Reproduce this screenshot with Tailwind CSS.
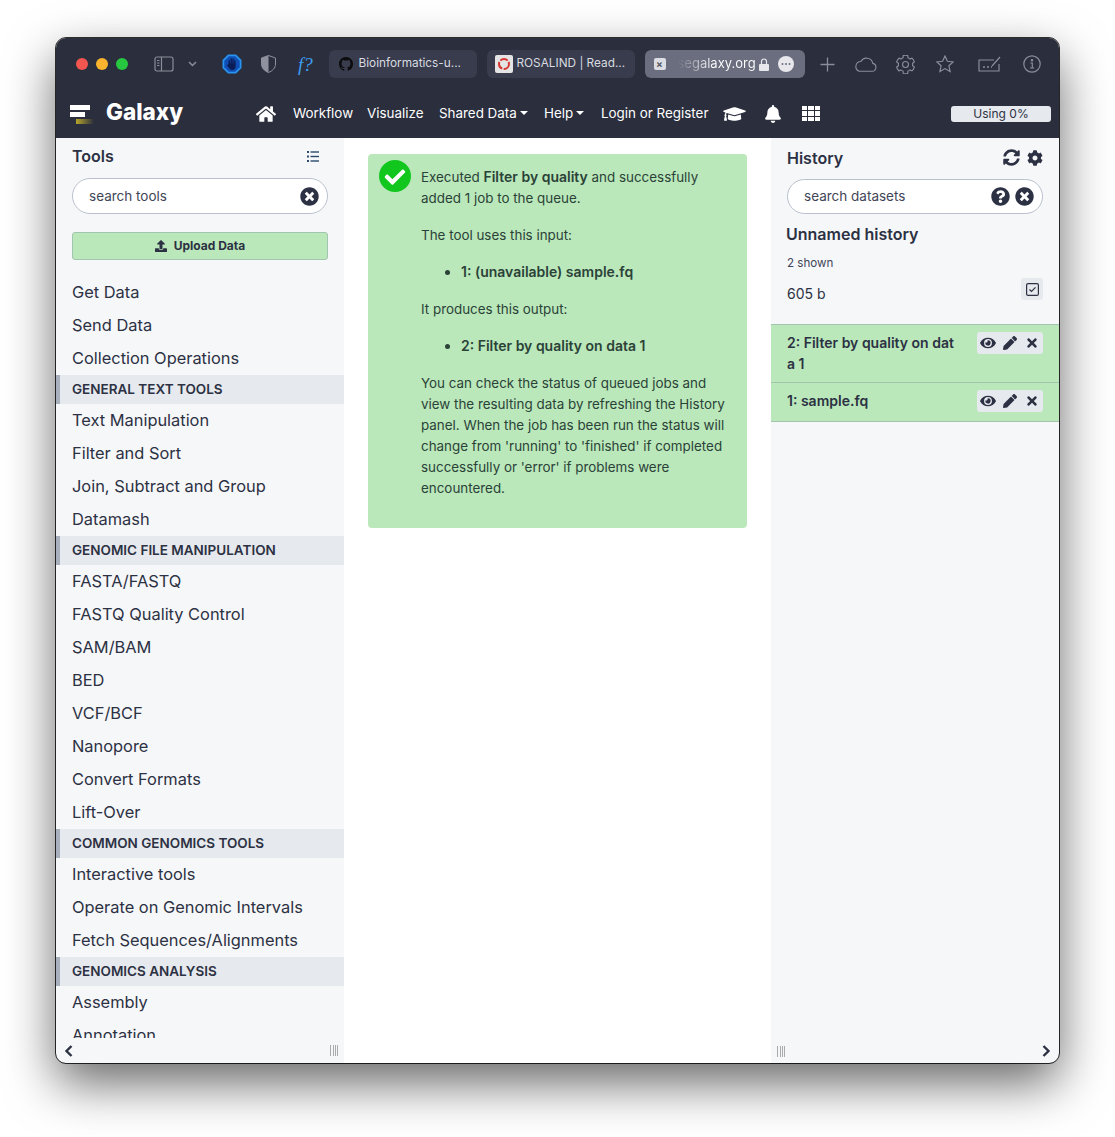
<!DOCTYPE html>
<html lang="en">
<head>
    <meta charset="UTF-8">
    <title>Galaxy</title>
    <script src="https://cdn.jsdelivr.net/npm/@tailwindcss/browser@4"></script>
</head>
<body class="bg-white w-[1115px] h-[1137px] overflow-hidden font-['Inter',sans-serif] text-[#2c3143]">
    <!-- browser window -->
    <div class="ml-[56px] mt-[38px] w-[1003px] h-[1025px] flex flex-col rounded-[10px] overflow-hidden outline outline-1 outline-black/80 shadow-[0_20px_50px_rgba(0,0,0,0.6)]">

        <!-- safari toolbar -->
        <div class="h-[54px] shrink-0 bg-[#2a2e3d] flex items-center pl-[20px] pb-[2px]">
            <span class="w-3 h-3 rounded-full bg-[#f2564f]"></span>
            <span class="w-3 h-3 rounded-full bg-[#fcb42e] ml-2"></span>
            <span class="w-3 h-3 rounded-full bg-[#27c83f] ml-2"></span>
            <svg class="ml-[26px]" width="20" height="16" viewBox="0 0 20 16" fill="none" stroke="#8b8e9a" stroke-width="1.2"><rect x="1" y="1" width="18" height="14" rx="2"/><path d="M7.500 1v14M3 4.500h2.500M3 7h2.500M3 9.500h2.500"/></svg>
            <svg class="ml-[14px]" width="9" height="6" viewBox="0 0 9 6" fill="none" stroke="#8b8e9a" stroke-width="1.5"><path d="M1 1l3.500 3.500L8 1"/></svg>
            <svg class="ml-[25px]" width="20" height="20" viewBox="0 0 20 20"><path d="M6 .5h8L19.500 6v8L14 19.500H6L.5 14V6z" fill="#2a93ee"/><path d="M6.800 2.300h6.400L17.700 6.800v6.400L13.200 17.700H6.800L2.300 13.200V6.800z" fill="#0f4fb5"/><path d="M7.300 10V6.800M9.200 10V5M11 10V5.200M12.800 10V6.800" stroke="#0c1c55" stroke-width="1.400" stroke-linecap="round"/><path d="M6.600 9.500h7v3c0 2-1.500 3.500-3.400 3.500-1.500 0-2.500-.8-3.100-2L5 11.500z" fill="#0c1c55"/></svg>
            <svg class="ml-[19px]" width="15" height="18" viewBox="0 0 15 18"><path d="M7.500 .5L14.500 3v6c0 4-3 7-7 8.500C3.500 16 .5 13 .5 9V3z" fill="none" stroke="#8f929e" stroke-width="1"/><path d="M7.500 .5L.5 3v6c0 4 3 7 7 8.500z" fill="#8f929e"/></svg>
            <span class="ml-[22px] w-[22px] text-[19px] leading-none italic text-[#3d9cf0] font-['Liberation_Serif',serif]">f?</span>

            <div class="ml-[8.5px] w-[148px] h-[28px] rounded-[6px] bg-[#383c4c] flex items-center pl-[10px] text-[11.8px] text-[#d9dbe1]">
                <svg width="14" height="14" viewBox="0 0 16 16" fill="#0c0c0f"><path d="M8 0C3.580 0 0 3.580 0 8c0 3.540 2.290 6.530 5.470 7.590.4.070.55-.17.55-.38 0-.19-.01-.82-.01-1.490-2.010.37-2.530-.49-2.690-.94-.09-.23-.48-.94-.82-1.130-.28-.15-.68-.52-.01-.53.63-.01 1.080.58 1.230.82.72 1.210 1.870.87 2.330.66.07-.52.28-.87.51-1.070-1.780-.2-3.640-.89-3.640-3.950 0-.87.31-1.590.82-2.150-.08-.2-.36-1.020.08-2.120 0 0 .67-.21 2.200.82.64-.18 1.320-.27 2-.27s1.360.09 2 .27c1.530-1.040 2.200-.82 2.200-.82.44 1.100.16 1.920.08 2.120.51.56.82 1.270.82 2.150 0 3.070-1.870 3.750-3.650 3.950.29.25.54.73.54 1.480 0 1.070-.01 1.930-.01 2.200 0 .21.15.46.55.38A8.013 8.013 0 0016 8c0-4.420-3.580-8-8-8z"/></svg>
                <span class="ml-[6px] whitespace-nowrap">Bioinformatics-u...</span>
            </div>
            <div class="ml-[10px] w-[148px] h-[28px] rounded-[6px] bg-[#383c4c] flex items-center pl-[8px] text-[11.8px] text-[#d9dbe1]">
                <span class="w-[18px] h-[18px] rounded-[2px] bg-[#e4e4e4] flex items-center justify-center">
                    <svg width="14" height="14" viewBox="0 0 14 14" fill="none" stroke="#d8352f" stroke-width="2" stroke-dasharray="8 1.500"><circle cx="7" cy="7" r="5"/></svg>
                </span>
                <span class="ml-[4px] whitespace-nowrap">ROSALIND | Read...</span>
            </div>
            <div class="ml-[10px] w-[160px] h-[28px] rounded-[6px] bg-[#6b6e7e] flex items-center pl-[9px] text-[13px] text-white">
                <span class="w-[12px] h-[12px] rounded-[2px] bg-[#dcdde2] flex items-center justify-center text-[10px] font-bold leading-none text-[#555866]">×</span>
                <span class="ml-[12px] whitespace-nowrap bg-gradient-to-r from-[#6b6e7e] to-white to-[45%] bg-clip-text text-transparent">segalaxy.org</span>
                <svg class="ml-[3px]" width="10" height="13" viewBox="0 0 10 13" fill="#e8e8ec"><path d="M1 6h8a1 1 0 0 1 1 1v5a1 1 0 0 1-1 1H1a1 1 0 0 1-1-1V7a1 1 0 0 1 1-1z"/><path d="M2.500 6V3.500a2.500 2.500 0 0 1 5 0V6" fill="none" stroke="#e8e8ec" stroke-width="1.200"/></svg>
                <svg class="ml-[9px]" width="16" height="16" viewBox="0 0 16 16"><circle cx="8" cy="8" r="8" fill="#e8e8ec"/><circle cx="4.500" cy="8" r="1" fill="#6b6e7e"/><circle cx="8" cy="8" r="1" fill="#6b6e7e"/><circle cx="11.500" cy="8" r="1" fill="#6b6e7e"/></svg>
            </div>
            <svg class="ml-[15px]" width="15" height="15" viewBox="0 0 15 15" stroke="#8b8e9a" stroke-width="1.300"><path d="M7.500 .5v14M.5 7.500h14"/></svg>
            <svg class="ml-[19px]" width="23" height="15" viewBox="0 0 23 15" fill="none" stroke="#8b8e9a" stroke-width="1.100"><path d="M5.500 14.300h12.500a4 4 0 0 0 .8-7.900A6.300 6.300 0 0 0 7 4.500a5 5 0 0 0-1.500 9.800z"/></svg>
            <svg class="ml-[19px]" width="19" height="19" viewBox="0 0 512 512" fill="none" stroke="#8b8e9a" stroke-width="30"><path d="M487.400 315.700l-42.600-24.600c4.300-23.200 4.300-47 0-70.200l42.600-24.600c4.900-2.800 7.100-8.600 5.500-14-11.100-35.600-30-67.800-54.700-94.600-3.800-4.100-10-5.100-14.800-2.300L380.800 110c-17.900-15.400-38.500-27.300-60.800-35.100V25.800c0-5.600-3.900-10.500-9.400-11.700-36.700-8.200-74.300-7.800-109.200 0-5.500 1.200-9.400 6.100-9.400 11.700V75c-22.200 7.900-42.800 19.800-60.800 35.100L88.700 85.500c-4.900-2.800-11-1.900-14.800 2.300-24.700 26.700-43.600 58.900-54.700 94.600-1.700 5.400.6 11.200 5.500 14L67.300 221c-4.300 23.200-4.300 47 0 70.200l-42.600 24.600c-4.900 2.800-7.100 8.600-5.500 14 11.100 35.600 30 67.800 54.700 94.600 3.800 4.100 10 5.100 14.800 2.300l42.600-24.600c17.900 15.400 38.500 27.300 60.800 35.100v49.200c0 5.600 3.900 10.500 9.400 11.700 36.700 8.200 74.300 7.800 109.200 0 5.500-1.200 9.400-6.100 9.400-11.700v-49.200c22.200-7.900 42.800-19.800 60.800-35.100l42.600 24.600c4.900 2.800 11 1.900 14.800-2.300 24.700-26.700 43.600-58.900 54.700-94.600 1.500-5.500-.7-11.300-5.600-14.100z"/><circle cx="256" cy="256" r="80"/></svg>
            <svg class="ml-[21px]" width="18" height="18" viewBox="0 0 18 18" fill="none" stroke="#8b8e9a" stroke-width="1.200"><path d="M9 1l2.400 5.300 5.800.6-4.300 3.900 1.200 5.700L9 13.600l-5.100 2.900 1.200-5.700L.8 6.900l5.800-.6z"/></svg>
            <svg class="ml-[24px]" width="24" height="18" viewBox="0 0 24 18" fill="none" stroke="#8b8e9a" stroke-width="1.200"><path d="M16 5H1v11h20V9M14 11L22 2"/><path d="M5 12h2M9 12h2M13 12h1" stroke-width="1.500"/></svg>
            <svg class="ml-[21px]" width="18" height="18" viewBox="0 0 18 18" fill="none" stroke="#8b8e9a" stroke-width="1.200"><circle cx="9" cy="9" r="8.200"/><path d="M7.300 8h2v5M7 13h4.200" /><circle cx="9" cy="5.300" r=".7" fill="#8b8e9a"/></svg>
        </div>

        <!-- galaxy masthead -->
        <div class="h-[46px] shrink-0 bg-[#2a2e3d] flex items-center text-[13.4px] text-white pb-[3px]">
            <svg class="ml-[14px]" width="24" height="22" viewBox="0 0 24 22"><defs><linearGradient id="gold" x1="0" x2="1" y1="0" y2="0"><stop offset="0" stop-color="#b8a52a"/><stop offset="1" stop-color="#b8a52a" stop-opacity="0"/></linearGradient></defs><rect x="0" y="2" width="20" height="5" fill="#fff"/><rect x="0" y="9" width="15" height="5" fill="#fff"/><rect x="6" y="16" width="18" height="5" fill="url(#gold)"/></svg>
            <span class="ml-[12px] w-[77px] text-[22.5px] font-extrabold leading-none -mt-[2px]">Galaxy</span>
            <svg class="ml-[73px]" width="20" height="18" viewBox="0 0 576 512" fill="#fff"><path d="M280.370 148.260L96 300.110V464a16 16 0 0 0 16 16l112.060-.29a16 16 0 0 0 15.920-16V368a16 16 0 0 1 16-16h64a16 16 0 0 1 16 16v95.640a16 16 0 0 0 16 16.050L464 480a16 16 0 0 0 16-16V300L295.670 148.260a12.190 12.190 0 0 0-15.300 0zM571.600 251.470L488 182.560V44.050a12 12 0 0 0-12-12h-56a12 12 0 0 0-12 12v72.610L318.470 43a48 48 0 0 0-61 0L4.340 251.470a12 12 0 0 0-1.600 16.900l25.500 31A12 12 0 0 0 45.150 301l235.220-193.740a12.190 12.190 0 0 1 15.300 0L530.900 301a12 12 0 0 0 16.900-1.600l25.500-31a12 12 0 0 0-1.700-16.930z"/></svg>
            <span class="ml-[17px] w-[74px]">Workflow</span>
            <span class="w-[72px]">Visualize</span>
            <span class="flex items-center w-[105px]">Shared Data<span class="ml-[3px] border-x-[4px] border-x-transparent border-t-[4px] border-t-white"></span></span>
            <span class="flex items-center w-[57px]">Help<span class="ml-[3px] border-x-[4px] border-x-transparent border-t-[4px] border-t-white"></span></span>
            <span class="w-[122px] whitespace-nowrap">Login or Register</span>
            <svg width="23" height="18" viewBox="0 0 640 512" fill="#fff"><path d="M622.340 153.200L343.400 67.500c-15.200-4.670-31.600-4.670-46.790 0L17.660 153.200c-23.540 7.230-23.540 38.360 0 45.590l48.630 14.940c-10.670 13.190-17.230 29.280-17.880 46.900C38.780 266.150 32 276.110 32 288c0 10.780 5.680 19.850 13.860 25.650L20.330 428.530C18.110 438.520 25.710 448 35.940 448h56.110c10.240 0 17.840-9.480 15.620-19.470L82.140 313.650C90.320 307.850 96 298.780 96 288c0-11.570-6.470-21.250-15.660-26.870.76-15.020 8.440-28.300 20.690-36.720L296.600 284.500c9.060 2.780 26.440 6.250 46.790 0l278.950-85.700c23.550-7.240 23.550-38.360 0-45.600zM352.790 315.090c-28.530 8.760-52.840 3.920-65.590 0l-145.020-44.550L128 384c0 35.350 85.960 64 192 64s192-28.650 192-64l-14.180-113.470-145.030 44.560z"/></svg>
            <svg class="ml-[19px]" width="16" height="18" viewBox="0 0 448 512" fill="#fff"><path d="M224 512c35.320 0 63.970-28.650 63.970-64H160.030c0 35.350 28.650 64 63.970 64zm215.390-149.710c-19.320-20.760-55.470-51.990-55.470-154.290 0-77.700-54.480-139.900-127.940-155.160V32c0-17.670-14.320-32-31.980-32s-31.980 14.330-31.980 32v20.840C118.560 68.100 64.080 130.300 64.080 208c0 102.300-36.150 133.530-55.470 154.290-6 6.450-8.660 14.160-8.610 21.710.11 16.400 12.980 32 32.100 32h383.800c19.120 0 32-15.600 32.100-32 .05-7.550-2.610-15.270-8.610-21.710z"/></svg>
            <div class="ml-[21px] w-[18px] h-[16px] grid grid-cols-3 grid-rows-3 gap-[1px]">
                <span class="bg-white"></span><span class="bg-white"></span><span class="bg-white"></span>
                <span class="bg-white"></span><span class="bg-white"></span><span class="bg-white"></span>
                <span class="bg-white"></span><span class="bg-white"></span><span class="bg-white"></span>
            </div>
            <div class="ml-[131px] w-[100px] h-[16px] rounded-[3px] bg-[#e6e9ed] text-[#2c3143] text-[12px] leading-[16px] text-center">Using 0%</div>
        </div>

        <div class="flex-1 flex min-h-0">
            <!-- tools panel -->
            <div class="w-[288px] shrink-0 bg-[#f6f7f9] flex flex-col">
                <div class="h-[40px] shrink-0 flex items-center justify-between pl-[16px] pr-[25px] pb-[4px]">
                    <span class="text-[16px] font-semibold">Tools</span>
                    <svg width="12" height="11" viewBox="0 0 12 11" fill="#2c4a6e"><rect y="0" width="2" height="2"/><rect y="4.500" width="2" height="2"/><rect y="9" width="2" height="2"/><rect x="3.500" y=".3" width="8.500" height="1.400"/><rect x="3.500" y="4.800" width="8.500" height="1.400"/><rect x="3.500" y="9.300" width="8.500" height="1.400"/></svg>
                </div>
                <div class="mx-[16px] h-[36px] shrink-0 rounded-full bg-white border border-[#b8c0cc] flex items-center justify-between pl-[16px] pr-[8px] text-[13.5px] text-[#3f4557]">
                    <span>search tools</span>
                    <svg width="19" height="19" viewBox="0 0 512 512" fill="#2c3143"><path d="M256 8C119 8 8 119 8 256s111 248 248 248 248-111 248-248S393 8 256 8zm121.600 313.100c4.700 4.700 4.700 12.300 0 17L338 377.600c-4.700 4.700-12.300 4.700-17 0L256 312l-65.100 65.600c-4.700 4.700-12.300 4.700-17 0L134.400 338c-4.700-4.700-4.700-12.300 0-17l65.600-65-65.600-65.100c-4.700-4.700-4.700-12.300 0-17l39.600-39.600c4.700-4.700 12.300-4.700 17 0l65 65.700 65.100-65.600c4.700-4.700 12.300-4.700 17 0l39.600 39.600c4.700 4.700 4.700 12.300 0 17L312 256l65.600 65.100z"/></svg>
                </div>
                <div class="mx-[16px] mt-[18px] h-[28px] shrink-0 rounded-[3px] bg-[#bae8ba] border border-[#a3c4ad] flex items-center justify-center text-[12px] font-bold">
                    <svg width="12" height="12" viewBox="0 0 512 512" fill="#2c3143"><path d="M296 384h-80c-13.300 0-24-10.700-24-24V192h-87.700c-17.800 0-26.700-21.500-14.100-34.100L242.300 5.700c7.500-7.500 19.800-7.500 27.300 0l152.200 152.200c12.600 12.600 3.700 34.100-14.100 34.100H320v168c0 13.300-10.700 24-24 24zm216-8v112c0 13.300-10.700 24-24 24H24c-13.300 0-24-10.700-24-24V376c0-13.300 10.700-24 24-24h136v8c0 30.900 25.100 56 56 56h80c30.900 0 56-25.100 56-56v-8h136c13.300 0 24 10.700 24 24z"/></svg>
                    <span class="ml-[7px]">Upload Data</span>
                </div>
                <div class="mt-[16px] h-[762px] shrink-0 overflow-hidden text-[16.4px]">
                    <div class="h-[33px] leading-[33px] pl-[16px]">Get Data</div>
                    <div class="h-[33px] leading-[33px] pl-[16px]">Send Data</div>
                    <div class="h-[33px] leading-[33px] pl-[16px]">Collection Operations</div>
                    <div class="h-[29px] leading-[29px] pl-[12px] border-l-4 border-[#a9b1bf] bg-[#e6e9ed] text-[13.5px] font-semibold">GENERAL TEXT TOOLS</div>
                    <div class="h-[33px] leading-[33px] pl-[16px]">Text Manipulation</div>
                    <div class="h-[33px] leading-[33px] pl-[16px]">Filter and Sort</div>
                    <div class="h-[33px] leading-[33px] pl-[16px]">Join, Subtract and Group</div>
                    <div class="h-[33px] leading-[33px] pl-[16px]">Datamash</div>
                    <div class="h-[29px] leading-[29px] pl-[12px] border-l-4 border-[#a9b1bf] bg-[#e6e9ed] text-[13.5px] font-semibold">GENOMIC FILE MANIPULATION</div>
                    <div class="h-[33px] leading-[33px] pl-[16px]">FASTA/FASTQ</div>
                    <div class="h-[33px] leading-[33px] pl-[16px]">FASTQ Quality Control</div>
                    <div class="h-[33px] leading-[33px] pl-[16px]">SAM/BAM</div>
                    <div class="h-[33px] leading-[33px] pl-[16px]">BED</div>
                    <div class="h-[33px] leading-[33px] pl-[16px]">VCF/BCF</div>
                    <div class="h-[33px] leading-[33px] pl-[16px]">Nanopore</div>
                    <div class="h-[33px] leading-[33px] pl-[16px]">Convert Formats</div>
                    <div class="h-[33px] leading-[33px] pl-[16px]">Lift-Over</div>
                    <div class="h-[29px] leading-[29px] pl-[12px] border-l-4 border-[#a9b1bf] bg-[#e6e9ed] text-[13.5px] font-semibold">COMMON GENOMICS TOOLS</div>
                    <div class="h-[33px] leading-[33px] pl-[16px]">Interactive tools</div>
                    <div class="h-[33px] leading-[33px] pl-[16px]">Operate on Genomic Intervals</div>
                    <div class="h-[33px] leading-[33px] pl-[16px]">Fetch Sequences/Alignments</div>
                    <div class="h-[29px] leading-[29px] pl-[12px] border-l-4 border-[#a9b1bf] bg-[#e6e9ed] text-[13.5px] font-semibold">GENOMICS ANALYSIS</div>
                    <div class="h-[33px] leading-[33px] pl-[16px]">Assembly</div>
                    <div class="h-[33px] leading-[33px] pl-[16px]">Annotation</div>
                </div>
                <div class="flex-1 flex items-center justify-between pl-[8px] pr-[6px]">
                    <svg width="10" height="12" viewBox="0 0 10 12" fill="none" stroke="#2c3143" stroke-width="2.400"><path d="M7.500 1L2.500 6l5 5"/></svg>
                    <div class="w-[8px] h-[11px] border-x border-[#aaa] flex justify-center gap-[1px] px-[1px]"><span class="w-px bg-[#aaa]"></span><span class="w-px bg-[#aaa]"></span></div>
                </div>
            </div>

            <!-- center panel -->
            <div class="flex-1 bg-white pt-[16px] pl-[24px] pr-[24px]">
                <div class="h-[374px] rounded-[4px] bg-[#bae8ba] flex text-[13.4px] leading-[21px] text-[#2b4238] pl-[11px] pt-[6px]">
                    <svg class="shrink-0" width="32" height="32" viewBox="8 8 496 496"><path fill="#11c71e" d="M504 256c0 136.967-111.033 248-248 248S8 392.967 8 256 119.033 8 256 8s248 111.033 248 248z"/><path fill="#fff" d="M227.314 387.314l184-184c6.248-6.248 6.248-16.379 0-22.627l-22.627-22.627c-6.248-6.249-16.379-6.249-22.628 0L216 308.118l-70.059-70.059c-6.248-6.248-16.379-6.248-22.628 0l-22.627 22.627c-6.248 6.248-6.248 16.379 0 22.627l104 104c6.249 6.249 16.379 6.249 22.628.001z"/></svg>
                    <div class="ml-[10px] pt-[6px]">
                        <p class="whitespace-nowrap">Executed <b class="font-semibold text-[14px]">Filter by quality</b> and successfully<br>added 1 job to the queue.</p>
                        <p class="mt-[16px]">The tool uses this input:</p>
                        <ul class="mt-[15px] pl-[40px] list-disc font-semibold text-[14px]"><li>1: (unavailable) sample.fq</li></ul>
                        <p class="mt-[17px]">It produces this output:</p>
                        <ul class="mt-[15px] pl-[40px] list-disc font-semibold text-[14px]"><li>2: Filter by quality on data 1</li></ul>
                        <p class="mt-[17px] whitespace-nowrap">You can check the status of queued jobs and<br>view the resulting data by refreshing the History<br>panel. When the job has been run the status will<br>change from 'running' to 'finished' if completed<br>successfully or 'error' if problems were<br>encountered.</p>
                    </div>
                </div>
            </div>

            <!-- history panel -->
            <div class="w-[288px] shrink-0 bg-[#f6f7f9] flex flex-col">
                <div class="h-[41px] shrink-0 flex items-center justify-between pl-[16px] pr-[16px] pb-[2px]">
                    <span class="text-[16px] font-semibold">History</span>
                    <div class="flex items-center gap-[7px]">
                        <svg width="17" height="17" viewBox="0 0 512 512" fill="#2c3143"><path d="M370.720 133.280C339.458 104.008 298.888 87.962 255.848 88c-77.458.068-144.328 53.178-162.791 126.850-1.344 5.363-6.122 9.150-11.651 9.150H24.103c-7.498 0-13.194-6.807-11.807-14.176C33.933 94.924 134.813 8 256 8c66.448 0 126.791 26.136 171.315 68.685L463.030 40.970C478.149 25.851 504 36.559 504 57.941V192c0 13.255-10.745 24-24 24H345.941c-21.382 0-32.090-25.851-16.971-40.971l41.750-41.749zM32 296h134.059c21.382 0 32.090 25.851 16.971 40.971l-41.750 41.750c31.262 29.273 71.835 45.319 114.876 45.280 77.418-.07 144.315-53.144 162.787-126.849 1.344-5.363 6.122-9.150 11.651-9.150h57.304c7.498 0 13.194 6.807 11.807 14.176C478.067 417.076 377.187 504 256 504c-66.448 0-126.791-26.136-171.315-68.685L48.970 471.030C33.851 486.149 8 475.441 8 454.059V320c0-13.255 10.745-24 24-24z"/></svg>
                        <svg width="16" height="16" viewBox="0 0 512 512" fill="#2c3143"><path d="M487.400 315.700l-42.600-24.600c4.300-23.200 4.300-47 0-70.200l42.600-24.600c4.900-2.800 7.100-8.600 5.500-14-11.100-35.600-30-67.800-54.700-94.600-3.800-4.100-10-5.100-14.800-2.300L380.800 110c-17.900-15.400-38.500-27.300-60.800-35.100V25.800c0-5.600-3.900-10.500-9.400-11.700-36.700-8.200-74.300-7.800-109.200 0-5.500 1.200-9.400 6.100-9.400 11.700V75c-22.200 7.900-42.800 19.800-60.800 35.100L88.700 85.500c-4.900-2.800-11-1.900-14.800 2.300-24.700 26.700-43.600 58.900-54.700 94.600-1.700 5.400.6 11.200 5.500 14L67.300 221c-4.300 23.200-4.300 47 0 70.200l-42.600 24.600c-4.900 2.800-7.100 8.600-5.500 14 11.100 35.600 30 67.800 54.700 94.600 3.800 4.100 10 5.100 14.800 2.300l42.600-24.600c17.900 15.400 38.500 27.300 60.800 35.100v49.200c0 5.600 3.900 10.500 9.400 11.700 36.700 8.200 74.300 7.800 109.200 0 5.500-1.200 9.400-6.100 9.400-11.700v-49.200c22.200-7.900 42.800-19.800 60.800-35.100l42.600 24.600c4.900 2.800 11 1.900 14.800-2.300 24.700-26.700 43.600-58.900 54.700-94.600 1.500-5.500-.7-11.300-5.600-14.100zM256 336c-44.100 0-80-35.900-80-80s35.900-80 80-80 80 35.900 80 80-35.900 80-80 80z"/></svg>
                    </div>
                </div>
                <div class="mx-[16px] h-[35px] shrink-0 rounded-full bg-white border border-[#b8c0cc] flex items-center justify-between pl-[16px] pr-[8px] text-[13.5px] text-[#3f4557]">
                    <span>search datasets</span>
                    <div class="flex gap-[5px]">
                        <svg width="19" height="19" viewBox="0 0 512 512" fill="#2c3143"><path d="M504 256c0 136.997-111.043 248-248 248S8 392.997 8 256C8 119.083 119.043 8 256 8s248 111.083 248 248zM262.655 90c-54.497 0-89.255 22.957-116.549 63.758-3.536 5.286-2.353 12.415 2.715 16.258l34.699 26.310c5.205 3.947 12.621 3.008 16.665-2.122 17.864-22.658 30.113-35.797 57.303-35.797 20.429 0 45.698 13.148 45.698 32.958 0 14.976-12.363 22.667-32.534 33.976C247.128 238.528 216 254.941 216 296v4c0 6.627 5.373 12 12 12h56c6.627 0 12-5.373 12-12v-1.333c0-28.462 83.186-29.647 83.186-106.667 0-58.002-60.165-102-116.531-102zM256 338c-25.365 0-46 20.635-46 46 0 25.364 20.635 46 46 46s46-20.636 46-46c0-25.365-20.635-46-46-46z"/></svg>
                        <svg width="19" height="19" viewBox="0 0 512 512" fill="#2c3143"><path d="M256 8C119 8 8 119 8 256s111 248 248 248 248-111 248-248S393 8 256 8zm121.600 313.100c4.700 4.700 4.700 12.300 0 17L338 377.600c-4.700 4.700-12.300 4.700-17 0L256 312l-65.100 65.600c-4.700 4.700-12.300 4.700-17 0L134.400 338c-4.700-4.700-4.700-12.300 0-17l65.600-65-65.600-65.100c-4.700-4.700-4.700-12.300 0-17l39.600-39.600c4.700-4.700 12.300-4.700 17 0l65 65.700 65.100-65.600c4.700-4.700 12.300-4.700 17 0l39.600 39.600c4.700 4.700 4.700 12.300 0 17L312 256l65.600 65.100z"/></svg>
                    </div>
                </div>
                <div class="pl-[15px] pt-[10px] text-[16px] font-semibold leading-[20px]">Unnamed history</div>
                <div class="pl-[16px] mt-[10px] text-[11.6px] leading-[18px] text-[#3f4557]">2 shown</div>
                <div class="pl-[16px] pr-[16px] mt-[7px] h-[32px] flex justify-between text-[14px] text-[#2c3143]">
                    <span class="leading-[30px]">605 b</span>
                    <span class="w-[22px] h-[22px] -mt-px rounded-[3px] bg-[#e6e9ed] flex items-center justify-center">
                        <svg width="13" height="13" viewBox="0 0 13 13" fill="none" stroke="#2c3143" stroke-width="1.200"><rect x=".6" y=".6" width="11.800" height="11.800" rx="1.500"/><path d="M3.500 6.500l2 2L9.500 4.300"/></svg>
                    </span>
                </div>
                <div class="mt-[12.5px] h-[59px] shrink-0 bg-[#bae8ba] border-y border-[#a3c4ad] flex items-start justify-between pl-[16px] pr-[16px] pt-[7px] text-[14px] font-semibold leading-[21px]">
                    <div class="w-[172px] break-all">2: Filter by quality on dat<br>a 1</div>
                    <div class="flex h-[22px] rounded-[3px] bg-[#e6e9ed]">
                        <span class="w-[22px] flex items-center justify-center"><svg width="16" height="14" viewBox="0 0 576 512" fill="#2c3143"><path d="M572.520 241.400C518.290 135.590 410.930 64 288 64S57.680 135.640 3.480 241.410a32.350 32.350 0 0 0 0 29.190C57.710 376.410 165.070 448 288 448s230.320-71.640 284.520-177.410a32.350 32.350 0 0 0 0-29.190zM288 400a144 144 0 1 1 144-144 143.930 143.930 0 0 1-144 144zm0-240a95.310 95.310 0 0 0-25.310 3.790 47.850 47.850 0 0 1-66.900 66.900A95.780 95.780 0 1 0 288 160z"/></svg></span>
                        <span class="w-[22px] flex items-center justify-center"><svg width="14" height="14" viewBox="0 0 512 512" fill="#2c3143"><path d="M497.900 142.100l-46.100 46.100c-4.700 4.700-12.300 4.700-17 0l-111-111c-4.700-4.700-4.700-12.300 0-17l46.100-46.100c18.700-18.700 49.100-18.700 67.900 0l60.100 60.100c18.800 18.700 18.800 49.100 0 67.900zM284.200 99.800L21.600 362.400.4 483.900c-2.900 16.400 11.400 30.600 27.800 27.800l121.500-21.300 262.600-262.600c4.700-4.700 4.700-12.300 0-17l-111-111c-4.800-4.700-12.400-4.700-17.100 0z"/></svg></span>
                        <span class="w-[22px] flex items-center justify-center"><svg width="10" height="14" viewBox="0 0 352 512" fill="#2c3143"><path d="M242.720 256l100.070-100.070c12.280-12.280 12.280-32.190 0-44.480l-22.240-22.240c-12.280-12.280-32.190-12.280-44.480 0L176 189.280 75.930 89.210c-12.280-12.280-32.190-12.280-44.480 0L9.210 111.450c-12.280 12.280-12.280 32.190 0 44.480L109.280 256 9.210 356.070c-12.280 12.280-12.280 32.190 0 44.480l22.240 22.240c12.280 12.280 32.200 12.280 44.480 0L176 322.720l100.070 100.070c12.280 12.280 32.200 12.280 44.480 0l22.240-22.240c12.280-12.280 12.280-32.190 0-44.480L242.720 256z"/></svg></span>
                    </div>
                </div>
                <div class="h-[39px] shrink-0 bg-[#bae8ba] border-b border-[#a3c4ad] flex items-start justify-between pl-[16px] pr-[16px] pt-[7px] text-[14px] font-semibold leading-[21px]">
                    <div>1: sample.fq</div>
                    <div class="flex h-[22px] rounded-[3px] bg-[#e6e9ed]">
                        <span class="w-[22px] flex items-center justify-center"><svg width="16" height="14" viewBox="0 0 576 512" fill="#2c3143"><path d="M572.520 241.400C518.290 135.590 410.930 64 288 64S57.680 135.640 3.480 241.410a32.350 32.350 0 0 0 0 29.190C57.710 376.410 165.070 448 288 448s230.320-71.640 284.520-177.410a32.350 32.350 0 0 0 0-29.190zM288 400a144 144 0 1 1 144-144 143.930 143.930 0 0 1-144 144zm0-240a95.310 95.310 0 0 0-25.310 3.790 47.850 47.850 0 0 1-66.900 66.900A95.780 95.780 0 1 0 288 160z"/></svg></span>
                        <span class="w-[22px] flex items-center justify-center"><svg width="14" height="14" viewBox="0 0 512 512" fill="#2c3143"><path d="M497.900 142.100l-46.100 46.100c-4.700 4.700-12.300 4.700-17 0l-111-111c-4.700-4.700-4.700-12.300 0-17l46.100-46.100c18.700-18.700 49.100-18.700 67.900 0l60.100 60.100c18.800 18.700 18.800 49.100 0 67.900zM284.200 99.800L21.600 362.400.4 483.900c-2.900 16.400 11.400 30.600 27.800 27.800l121.500-21.300 262.600-262.600c4.700-4.700 4.700-12.300 0-17l-111-111c-4.800-4.700-12.400-4.700-17.100 0z"/></svg></span>
                        <span class="w-[22px] flex items-center justify-center"><svg width="10" height="14" viewBox="0 0 352 512" fill="#2c3143"><path d="M242.720 256l100.070-100.070c12.280-12.280 12.280-32.190 0-44.480l-22.240-22.240c-12.280-12.280-32.190-12.280-44.480 0L176 189.280 75.930 89.210c-12.280-12.280-32.190-12.280-44.480 0L9.210 111.450c-12.280 12.280-12.280 32.190 0 44.480L109.280 256 9.210 356.070c-12.280 12.280-12.280 32.190 0 44.480l22.240 22.240c12.280 12.280 32.200 12.280 44.480 0L176 322.720l100.070 100.070c12.280 12.280 32.200 12.280 44.480 0l22.240-22.240c12.280-12.280 12.280-32.190 0-44.480L242.720 256z"/></svg></span>
                    </div>
                </div>
                <div class="mt-auto h-[24px] flex items-center justify-between pl-[6px] pr-[8px]">
                    <div class="w-[8px] h-[11px] border-x border-[#aaa] flex justify-center gap-[1px] px-[1px]"><span class="w-px bg-[#aaa]"></span><span class="w-px bg-[#aaa]"></span></div>
                    <svg width="10" height="12" viewBox="0 0 10 12" fill="none" stroke="#2c3143" stroke-width="2.400"><path d="M2.500 1l5 5-5 5"/></svg>
                </div>
            </div>
        </div>
    </div>
</body>
</html>
